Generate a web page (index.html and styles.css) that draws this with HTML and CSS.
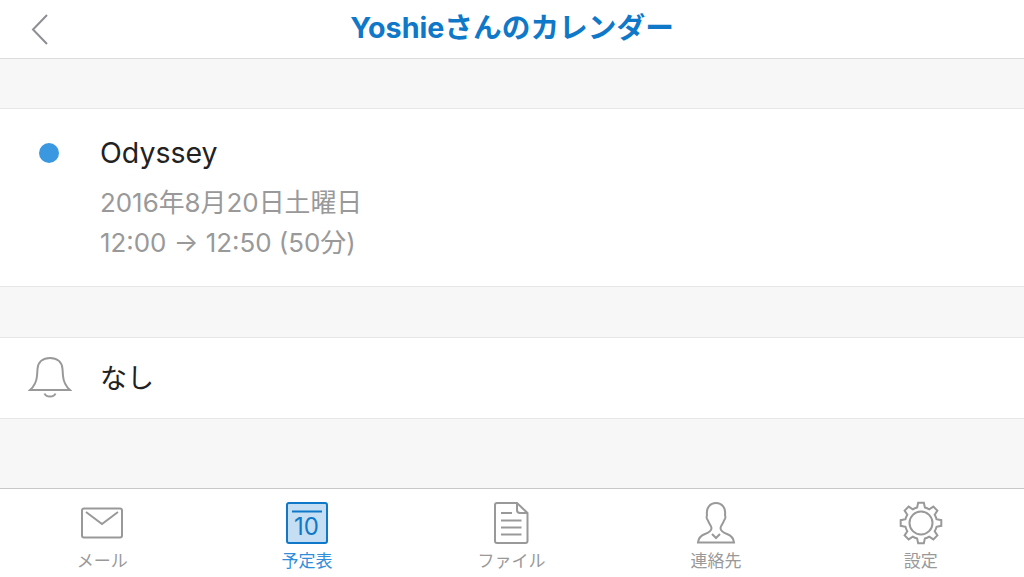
FILE: index.html
```html
<!DOCTYPE html>
<html lang="ja">
<head>
  <meta charset="UTF-8">
  <title>Yoshieさんのカレンダー</title>
  <link rel="stylesheet" href="styles.css">
</head>
<body>
<div class="app">
  <header class="topbar">
    <svg class="back" width="18" height="32" viewBox="0 0 18 32"><path d="M16 1 L2 15.5 L16 30"/></svg>
    <h1>Yoshieさんのカレンダー</h1>
  </header>
  <div class="gap gap-top"></div>
  <section class="event">
    <div class="event-mark"><span class="dot"></span></div>
    <div>
      <div class="event-title">Odyssey</div>
      <div class="event-meta">2016年8月20日土曜日</div>
      <div class="event-meta">12:00 → 12:50 (50分)</div>
    </div>
  </section>
  <div class="gap gap-mid"></div>
  <section class="reminder">
    <svg class="bell" width="44" height="44" viewBox="0 0 44 44">
      <path d="M2 34 H42 C38 30.500 35.500 26 35 20 L34.500 13 C34 6 29 2 22 2 C15 2 10 6 9.500 13 L9 20 C8.500 26 6 30.500 2 34 Z"/>
      <path d="M16.500 37.500 C18 41.500 26 41.500 27.500 37.500"/>
    </svg>
    <span class="reminder-text">なし</span>
  </section>
  <div class="gap gap-fill"></div>
  <nav class="tabbar">
    <div class="tab">
      <svg width="44" height="44" viewBox="0 0 44 44">
        <rect x="2" y="7.500" width="40" height="29" rx="2"/>
        <path d="M6 11 L22 23 L38 11"/>
      </svg>
      <span>メール</span>
    </div>
    <div class="tab tab-active">
      <svg width="44" height="44" viewBox="0 0 44 44">
        <rect class="cal-bg" x="2" y="2" width="40" height="40" rx="2"/>
        <path d="M7 10.500 H37"/>
        <text x="21.500" y="34" class="cal-num">10</text>
      </svg>
      <span>予定表</span>
    </div>
    <div class="tab">
      <svg width="44" height="44" viewBox="0 0 44 44">
        <path d="M8 2 H28 L38.500 12 V40 Q38.500 42 36.500 42 H8 Q6 42 6 40 V4 Q6 2 8 2 Z"/>
        <path d="M28 2 V9 Q28 12 31 12 H38.500"/>
        <path d="M12 12 H23 M12 19.500 H32.500 M12 26.500 H32.500 M12 33.500 H32.500"/>
      </svg>
      <span>ファイル</span>
    </div>
    <div class="tab">
      <svg width="44" height="44" viewBox="0 0 44 44">
        <path d="M4 41.500 C4.500 36.500 7 34.500 11 33 C15 31.500 17.500 30 17.500 27 C17.500 25 15 23 14 19.500 C12.500 18 12.500 15.500 13 14 C12 7 16 2 22 2 C28 2 32 7 31 14 C31.500 15.500 31.500 18 30 19.500 C29 23 26.500 25 26.500 27 C26.500 30 29 31.500 33 33 C37 34.500 39.500 36.500 40 41.500 Z"/>
        <path d="M18 33 L22 37 L26 33"/>
      </svg>
      <span>連絡先</span>
    </div>
    <div class="tab">
      <svg width="44" height="44" viewBox="0 0 44 44">
        <path d="M18.130 6.480 L19.150 1.700 H24.850 L25.870 6.480 A16 16 0 0 1 30.240 8.290 L34.340 5.620 L38.380 9.660 L35.710 13.760 A16 16 0 0 1 37.520 18.130 L42.300 19.150 V24.850 L37.520 25.870 A16 16 0 0 1 35.710 30.240 L38.380 34.340 L34.340 38.380 L30.240 35.710 A16 16 0 0 1 25.870 37.520 L24.850 42.300 H19.150 L18.130 37.520 A16 16 0 0 1 13.760 35.710 L9.660 38.380 L5.620 34.340 L8.290 30.240 A16 16 0 0 1 6.480 25.870 L1.700 24.850 V19.150 L6.480 18.130 A16 16 0 0 1 8.290 13.760 L5.620 9.660 L9.660 5.620 L13.760 8.290 A16 16 0 0 1 18.130 6.480 Z"/>
        <circle cx="22" cy="22" r="11.500"/>
      </svg>
      <span>設定</span>
    </div>
  </nav>
</div>
</body>
</html>
```

FILE: styles.css
```css
html, body {
  margin: 0;
  padding: 0;
}
body {
  background: #fff;
  font-family: "Inter", "Noto Sans CJK JP", sans-serif;
  color: #222;
  overflow: hidden;
}
.app {
  width: 1024px;
  height: 577px;
  display: flex;
  flex-direction: column;
}
svg {
  fill: none;
  stroke: #999;
  stroke-width: 2;
}
.topbar {
  height: 58px;
  box-sizing: border-box;
  padding-bottom: 7px;
  display: flex;
  align-items: center;
  justify-content: center;
  position: relative;
  flex: none;
}
.topbar h1 {
  margin: 0;
  font-size: 28.7px;
  font-weight: 700;
  color: #0f78c8;
}
.back {
  position: absolute;
  left: 31px;
  top: 14px;
  stroke: #8e8e93;
}
.gap {
  background: #f7f7f7;
  border-top: 1px solid #dcdcdc;
  border-bottom: 1px solid #e6e6e6;
  flex: none;
}
.gap-top { height: 49px; }
.gap-mid { height: 50px; border-top-color: #e6e6e6; }
.gap-fill { height: 69px; border-top-color: #e6e6e6; border-bottom: none; }
.event {
  height: 177px;
  display: flex;
  flex: none;
  padding-top: 25px;
  box-sizing: border-box;
}
.event-mark {
  width: 100px;
  flex: none;
  padding: 9px 0 0 39px;
  box-sizing: border-box;
}
.dot {
  display: block;
  width: 20px;
  height: 20px;
  border-radius: 50%;
  background: #3a98e0;
}
.event-title {
  font-size: 28.5px;
  line-height: 38px;
  margin-bottom: 11px;
}
.event-meta {
  font-size: 25.9px;
  line-height: 40px;
  color: #999;
}
.reminder {
  height: 80px;
  display: flex;
  align-items: center;
  flex: none;
}
.bell {
  margin: 0 27px 0 28px;
}
.reminder-text {
  font-size: 27px;
  margin-left: 1px;
  padding-bottom: 4px;
}
.tabbar {
  flex: 1;
  border-top: 1px solid #c8c8c8;
  padding-right: 1px;
  display: flex;
}
.tab {
  flex: 1;
  display: flex;
  flex-direction: column;
  align-items: center;
  padding-top: 12px;
  font-size: 17px;
  line-height: 24px;
  color: #999;
}
.tab span {
  margin-top: 4px;
}
.tab-active {
  color: #2f8fdc;
}
.tab-active svg {
  stroke: #0f78c8;
}
.cal-bg {
  fill: #c5def3;
}
.cal-num {
  font-size: 24px;
  fill: #0f78c8;
  stroke: none;
  text-anchor: middle;
}
```
